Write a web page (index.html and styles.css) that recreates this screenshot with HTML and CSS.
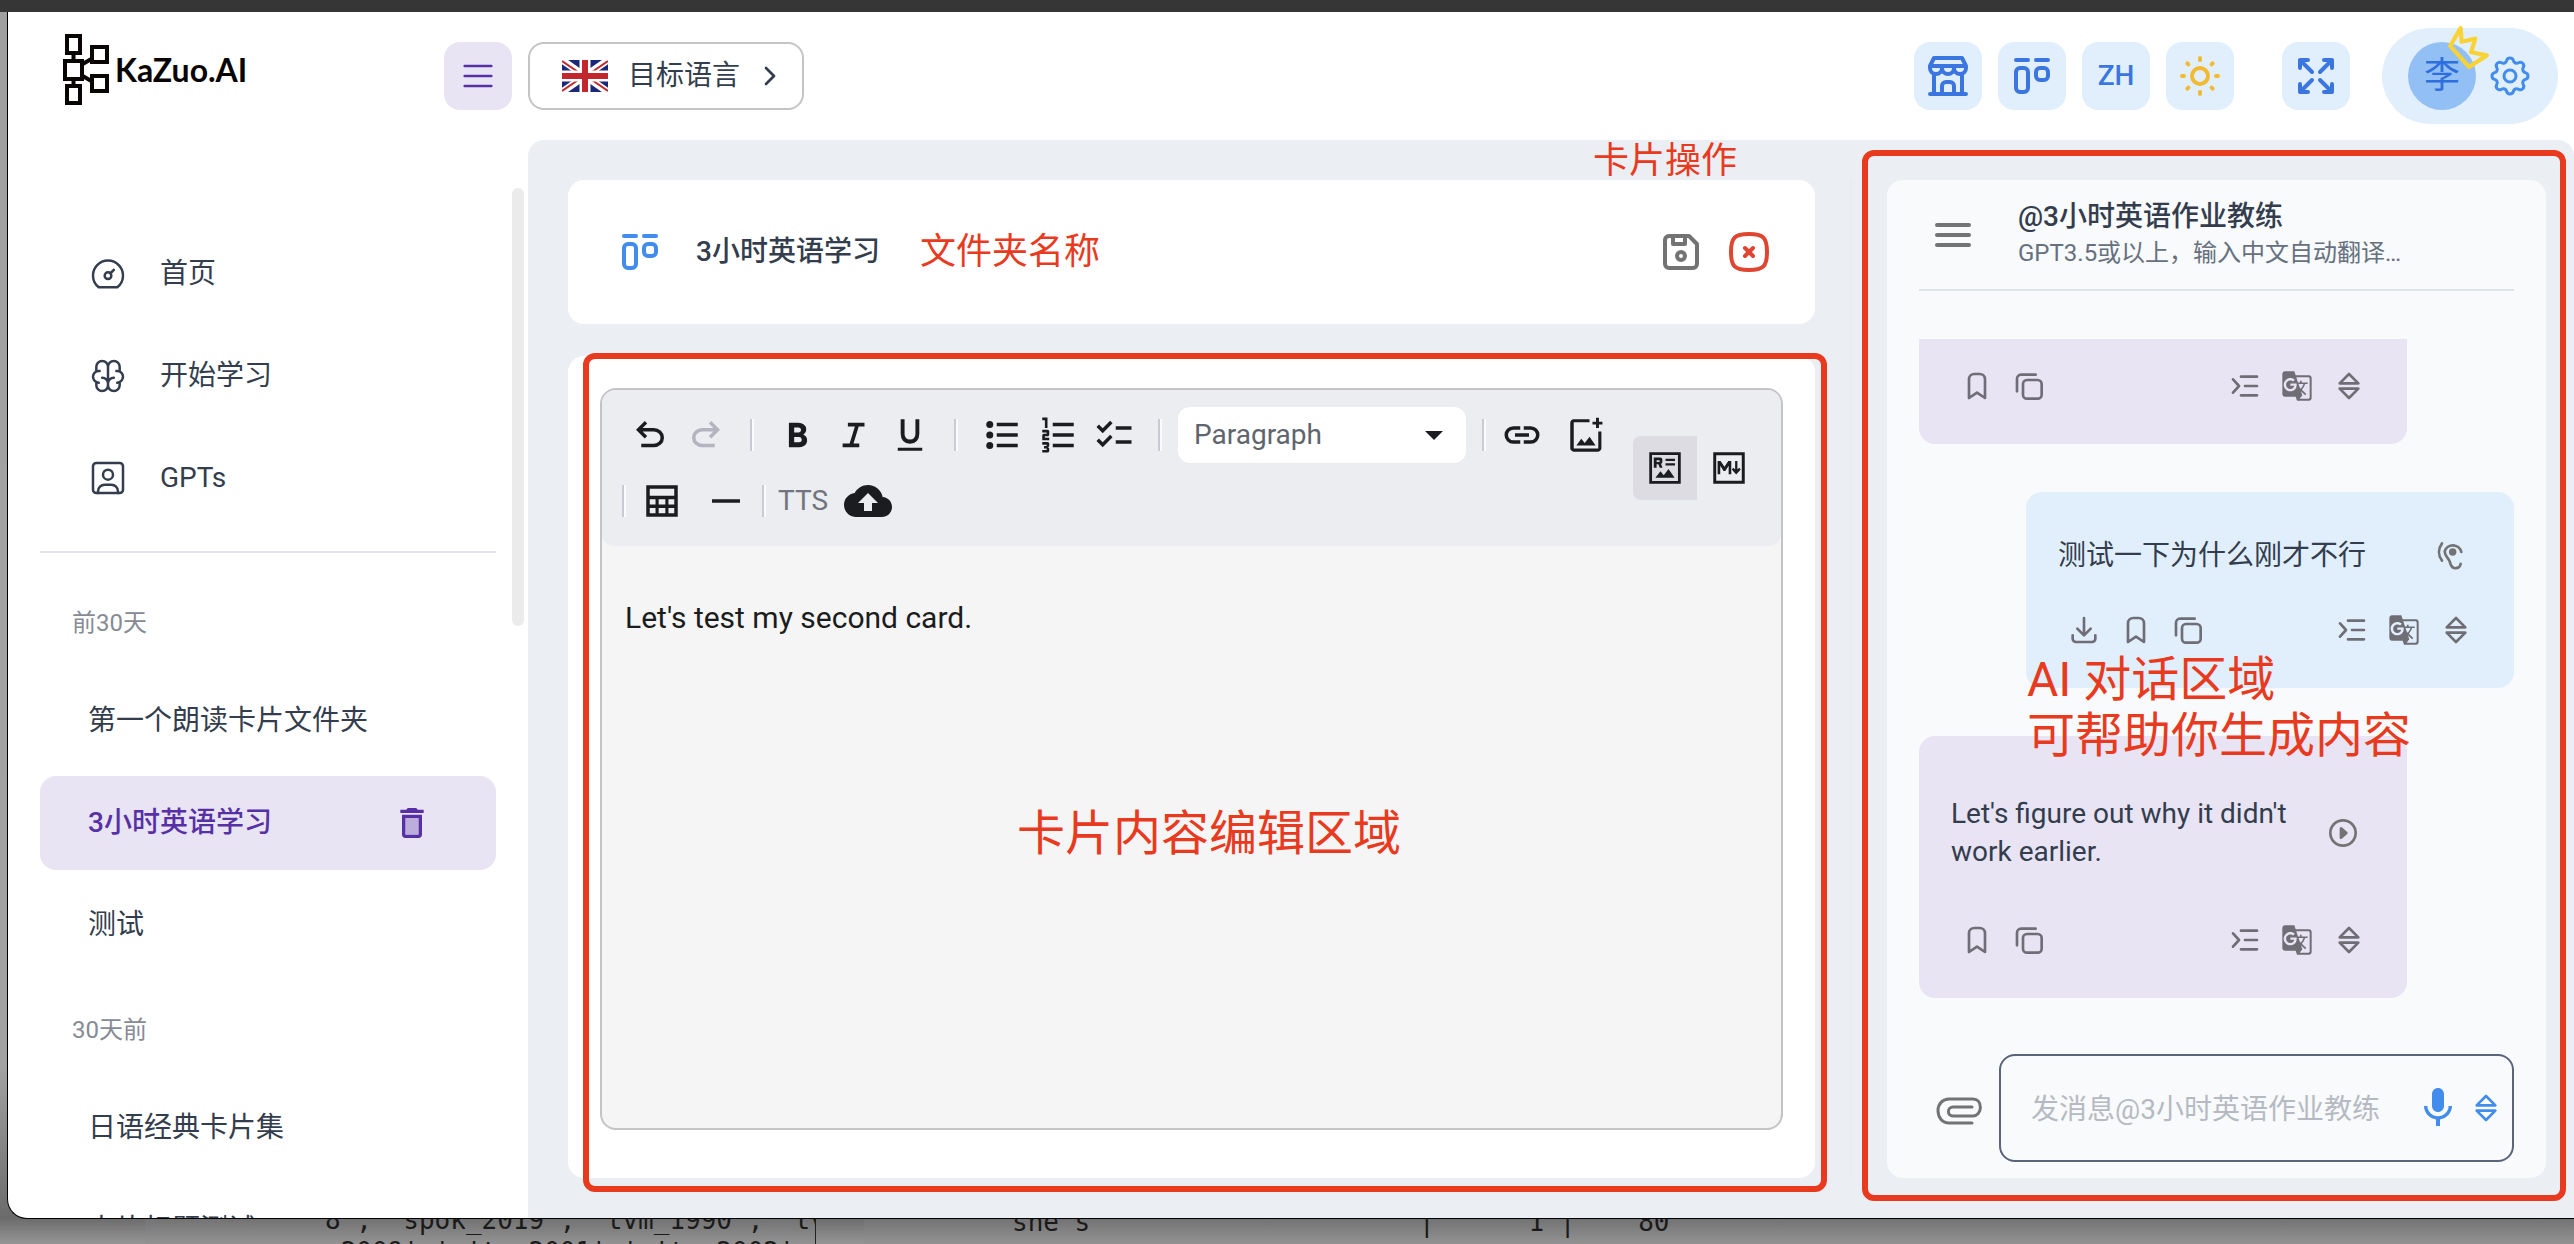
FILE: index.html
```html
<!DOCTYPE html>
<html lang="zh-CN">
<head>
<meta charset="utf-8">
<meta name="viewport" content="width=device-width, initial-scale=1">
<title>KaZuo.AI</title>
<link rel="stylesheet" href="styles.css">
</head>
<body>
<svg class="sprite" aria-hidden="true">
  <symbol id="i-menu" viewBox="0 0 24 24"><path d="M4 6h16M4 12h16M4 18h16"/></symbol>
  <symbol id="i-chevron" viewBox="0 0 24 24"><path d="M9 6l6 6-6 6"/></symbol>
  <symbol id="i-kanban" viewBox="0 0 24 24"><path d="M4 4h6M14 4h6"/><rect x="4" y="8" width="6" height="12" rx="2"/><rect x="14" y="8" width="6" height="6" rx="2"/></symbol>
  <symbol id="i-store" viewBox="0 0 24 24"><path d="M3 21h18M3 7v1a3 3 0 0 0 6 0V7m0 1a3 3 0 0 0 6 0V7m0 1a3 3 0 0 0 6 0V7H3l2-4h14l2 4M5 21V10.85M19 21V10.85M9 21v-4a2 2 0 0 1 2-2h2a2 2 0 0 1 2 2v4"/></symbol>
  <symbol id="i-sun" viewBox="0 0 24 24"><circle cx="12" cy="12" r="4"/><path d="M12 3v1M12 20v1M3 12h1M20 12h1M5.7 5.7l.5 .5M17.8 17.8l.5 .5M18.3 5.7l-.5 .5M6.200 17.8l-.5 .5"/></symbol>
  <symbol id="i-maximize" viewBox="0 0 24 24"><path d="M16 4h4v4M14 10l6-6M8 20H4v-4M4 20l6-6M16 20h4v-4M14 14l6 6M8 4H4v4M4 4l6 6"/></symbol>
  <symbol id="i-gear" viewBox="0 0 24 24"><path d="M10.325 4.317c.426-1.756 2.924-1.756 3.350 0a1.724 1.724 0 0 0 2.573 1.066c1.543-.94 3.310 .826 2.370 2.370a1.724 1.724 0 0 0 1.065 2.572c1.756 .426 1.756 2.924 0 3.350a1.724 1.724 0 0 0-1.066 2.573c.94 1.543-.826 3.310-2.370 2.370a1.724 1.724 0 0 0-2.572 1.065c-.426 1.756-2.924 1.756-3.350 0a1.724 1.724 0 0 0-2.573-1.066c-1.543 .94-3.310-.826-2.370-2.370a1.724 1.724 0 0 0-1.065-2.572c-1.756-.426-1.756-2.924 0-3.350a1.724 1.724 0 0 0 1.066-2.573c-.94-1.543 .826-3.310 2.370-2.370 1 .608 2.296 .070 2.572-1.065z"/><circle cx="12" cy="12" r="3"/></symbol>
  <symbol id="i-gauge" viewBox="0 0 24 24"><circle cx="12" cy="13" r="2"/><path d="M13.450 11.550L15.500 9.500M6.400 20a9 9 0 1 1 11.200 0z"/></symbol>
  <symbol id="i-brain" viewBox="0 0 24 24"><path d="M15.500 13a3.500 3.500 0 0 0-3.500 3.500v1a3.500 3.500 0 0 0 7 0v-1.800M8.500 13a3.500 3.500 0 0 1 3.500 3.500v1a3.500 3.500 0 0 1-7 0v-1.800M17.500 16a3.500 3.500 0 0 0 0-7H17M19 9.300V6.500a3.500 3.500 0 0 0-7 0M6.500 16a3.500 3.500 0 0 1 0-7H7M5 9.300V6.500a3.500 3.500 0 0 1 7 0v10"/></symbol>
  <symbol id="i-user" viewBox="0 0 24 24"><circle cx="12" cy="10" r="3"/><rect x="3" y="3" width="18" height="18" rx="2"/><path d="M6 21v-1a4 4 0 0 1 4-4h4a4 4 0 0 1 4 4v1"/></symbol>
  <symbol id="i-save" viewBox="0 0 24 24"><path d="M6 4h10l4 4v10a2 2 0 0 1-2 2H6a2 2 0 0 1-2-2V6a2 2 0 0 1 2-2"/><circle cx="12" cy="14" r="2"/><path d="M14 4v4H8V4"/></symbol>
  <symbol id="i-close" viewBox="0 0 24 24"><path d="M10 10l4 4m0-4l-4 4M12 3c7.200 0 9 1.800 9 9s-1.800 9-9 9-9-1.800-9-9 1.800-9 9-9z"/></symbol>
  <symbol id="i-undo" viewBox="0 0 24 24"><path d="M7 19v-2h7.100q1.575 0 2.738-1T18 13.500 16.838 11 14.100 10H7.800l2.600 2.600L9 14 4 9l5-5 1.400 1.400L7.800 8h6.300q2.425 0 4.163 1.575T20 13.500t-1.737 3.925T14.100 19z"/></symbol>
  <symbol id="i-bold" viewBox="0 0 24 24"><path d="M6.800 19V5h5.525q1.625 0 3 1T16.700 8.775q0 1.275-.575 1.963t-1.075.987q.625.275 1.388 1.025T17.200 15q0 2.225-1.625 3.113T12.525 19zm3.025-2.800h2.600q1.200 0 1.463-.612t.262-.888-.262-.887-1.538-.613H9.825zm0-5.700h2.325q.825 0 1.200-.425t.375-.95q0-.6-.425-.975t-1.100-.375H9.825z"/></symbol>
  <symbol id="i-italic" viewBox="0 0 24 24"><path d="M5.500 19v-2.100h4l3-9.800h-4V5H18v2.100h-3.300l-3 9.800H15V19z"/></symbol>
  <symbol id="i-underline" viewBox="0 0 24 24"><path d="M5 21v-1.700h14V21zm7-4q-2.525 0-3.925-1.575t-1.400-4.175V3H8.900v8.400q0 1.400.8 2.275t2.300.875 2.300-.875.8-2.275V3h2.225v8.250q0 2.600-1.400 4.175T12 17"/></symbol>
  <symbol id="i-bullets" viewBox="0 0 24 24"><path d="M9 19v-2h12v2zm0-6v-2h12v2zm0-6V5h12v2z"/><circle cx="5" cy="6" r="2"/><circle cx="5" cy="12" r="2"/><circle cx="5" cy="18" r="2"/></symbol>
  <symbol id="i-numbers" viewBox="0 0 24 24"><path d="M3 22v-1.500h2.500v-.75H4v-1.500h1.500v-.75H3V16h3q.425 0 .713.288T7 17v1q0 .425-.287.713T6 19q.425 0 .713.288T7 20v1q0 .425-.287.713T6 22zm0-7v-2.750q0-.425.288-.712T4 11.250h1.500v-.75H3V9h3q.425 0 .713.288T7 10v1.750q0 .425-.287.713T6 12.750H4.500v.75H7V15zm1.500-7V3.500H3V2h3v6zM9 19v-2h12v2zm0-6v-2h12v2zm0-6V5h12v2z"/></symbol>
  <symbol id="i-checks" viewBox="0 0 24 24"><path d="M5.550 19L2 15.450l1.400-1.400 2.125 2.125 4.250-4.250 1.400 1.425zm0-8L2 7.450l1.400-1.400 2.125 2.125 4.250-4.250 1.400 1.425zM13 17v-2h9v2zm0-8V7h9v2z"/></symbol>
  <symbol id="i-link" viewBox="0 0 24 24"><path d="M11 17H7q-2.075 0-3.537-1.463T2 12t1.463-3.537T7 7h4v2H7q-1.250 0-2.125.875T4 12t.875 2.125T7 15h4zm-3-4v-2h8v2zm5 4v-2h4q1.250 0 2.125-.875T20 12t-.875-2.125T17 9h-4V7h4q2.075 0 3.538 1.463T22 12t-1.463 3.538T17 17z"/></symbol>
  <symbol id="i-image" viewBox="0 0 24 24"><path d="M5 21.500q-.825 0-1.412-.587T3 19.500V5q0-.825.588-1.412T5 3h9v1.700H5v15h14V10h1.800v9.500q0 .825-.587 1.413T19 21.500zM17.700 8V6h-2V4.400h2V2.200h1.700v2.200h2V6h-2v2zM6.500 18h11l-3.500-5-2.700 3.600-2-2.400z"/></symbol>
  <symbol id="i-table" viewBox="0 0 24 24"><path d="M3 3h18v18H3zM5 5v4h14V5zm0 6v3h3.300v-3zm5.100 0v3h3.800v-3zm5.600 0v3H19v-3zM5 16v3h3.300v-3zm5.100 0v3h3.800v-3zm5.600 0v3H19v-3z" fill-rule="evenodd"/></symbol>
  <symbol id="i-rule" viewBox="0 0 24 24"><path d="M4 11h16v2H4z"/></symbol>
  <symbol id="i-cloud" viewBox="0 0 24 24"><path d="M19.350 10.040C18.670 6.590 15.640 4 12 4 9.110 4 6.600 5.640 5.350 8.040 2.340 8.360 0 10.910 0 14c0 3.310 2.690 6 6 6h13c2.760 0 5-2.240 5-5 0-2.640-2.050-4.780-4.650-4.960M14 13v4h-4v-4H7l5-5 5 5z"/></symbol>
  <symbol id="i-rich" viewBox="0 0 24 24"><path d="M3 3h18v18H3zM4.600 4.600v14.800h14.800V4.600z" fill-rule="evenodd"/><path d="M5.600 11.800V6h3.600q1.300 0 1.300 1.200v1.300q0 .9-.8 1.100l.9 2.200H9l-.8-2h-1v2zm1.600-3.300h1.700v-1H7.200zM12.300 6.700h5.400V8h-5.400zM12.300 9.300h5.400v1.300h-5.400zM6.500 17.500h11L14 12.500l-2.700 3.700-1.900-2.300z"/></symbol>
  <symbol id="i-markdown" viewBox="0 0 24 24"><path d="M3 3h18v18H3zM4.700 4.700v14.600h14.600V4.700z" fill-rule="evenodd"/><path d="M5.500 15.500V8h1.700l2.200 3.300L11.600 8h1.700v7.500h-1.500v-4.800l-1.900 3H8.900l-1.900-3v4.800zM15.500 8h1.300v4.800l1-1 .9 1-2.600 2.900-2.500-2.900.9-1 1 1z"/></symbol>
  <symbol id="i-bookmark" viewBox="0 0 24 24"><path d="M18 7v14l-6-4-6 4V7a4 4 0 0 1 4-4h4a4 4 0 0 1 4 4z"/></symbol>
  <symbol id="i-copy" viewBox="0 0 24 24"><rect x="7.500" y="7.500" width="14" height="14" rx="3"/><path d="M17 3.500H6a3 3 0 0 0-3 3V16"/></symbol>
  <symbol id="i-outline" viewBox="0 0 24 24"><path d="M9 5h12M12 12h9M9 19h12M3 7l4.500 5L3 17"/></symbol>
  <symbol id="i-translate" viewBox="0 0 24 24"><path d="M21 4H11l-1-3H3c-1.100 0-2 .9-2 2v15c0 1.100.9 2 2 2h8l1 3h9c1.100 0 2-.9 2-2V6c0-1.100-.9-2-2-2M7 16c-2.760 0-5-2.240-5-5s2.240-5 5-5c1.350 0 2.480.5 3.350 1.300L9.030 8.570c-.38-.36-1.040-.78-2.030-.78-1.740 0-3.150 1.440-3.150 3.210S5.260 14.210 7 14.210c2.010 0 2.840-1.440 2.920-2.410H7v-1.710h4.680c.07.31.12.61.12 1.020C11.800 13.970 9.890 16 7 16m6.170-5.420h3.700c-.43 1.250-1.110 2.430-2.050 3.470-.31-.35-.6-.72-.86-1.100zm8.330 9.920c0 .55-.45 1-1 1H14l2-2.500-1.040-3.100 3.100 3.100.92-.92-3.300-3.250.02-.02c1.130-1.250 1.930-2.690 2.400-4.220H20v-1.300h-4.530V8h-1.290v1.290h-1.440L11.460 5.500h9.040c.55 0 1 .45 1 1z"/></symbol>
  <symbol id="i-updown" viewBox="0 0 24 24"><path d="M5 10l7-7 7 7zM5 14l7 7 7-7z"/></symbol>
  <symbol id="i-download" viewBox="0 0 24 24"><path d="M3.500 16v2.500a2.500 2.500 0 0 0 2.500 2.500h12a2.500 2.500 0 0 0 2.500-2.500V16M12 3v13M7 11l5 5 5-5"/></symbol>
  <symbol id="i-ear" viewBox="0 0 24 24"><path d="M20.500 9A6.500 6.500 0 0 0 8 8.500c0 3.500 2.800 5 3.700 7.500.8 2 1 5.200 4.300 5.200 2.200 0 3.800-1.400 4-3.400M6 2.500C3 6.500 3 11.500 6 15.500"/><circle cx="14" cy="9" r="1.800" fill="currentColor"/></symbol>
  <symbol id="i-play" viewBox="0 0 24 24"><circle cx="12" cy="12" r="9.500"/><path d="M10.500 8.500v7l4-3.500z" fill="currentColor"/></symbol>
  <symbol id="i-clip" viewBox="0 0 24 24"><path d="M18.500 19H7c-3.300 0-5.500-2.600-5.500-6.200S4 7 7 7h12c2.200 0 3.700 1.700 3.700 4.200s-1.700 4.300-3.700 4.300H9c-1.500 0-2.300-1-2.300-2.200s1-2.300 2.300-2.300h9.500"/></symbol>
  <symbol id="i-mic" viewBox="0 0 24 24"><path d="M12 14c1.660 0 3-1.340 3-3V5c0-1.660-1.340-3-3-3S9 3.340 9 5v6c0 1.660 1.340 3 3 3m5.300-3c0 3-2.540 5.100-5.300 5.100S6.700 14 6.700 11H5c0 3.410 2.720 6.230 6 6.720V21h2v-3.280c3.280-.48 6-3.300 6-6.720z"/></symbol>
  <symbol id="i-trash" viewBox="0 0 24 24"><path d="M8 9h8v10H8z" opacity=".3"/><path fill-rule="evenodd" d="M15.500 4l-1-1h-5l-1 1H5v2h14V4zM6 19c0 1.100.9 2 2 2h8c1.100 0 2-.9 2-2V7H6zM8 9h8v10H8z"/></symbol>
</svg>

<div class="backdrop" aria-hidden="true">
  <div class="terminal terminal-left">
    <pre class="term-text term-ids">8', 'spok_2019', 'tvm_1990', 'tv
_2009','witw_2001','witw_2002'</pre>
  </div>
  <div class="terminal terminal-right">
    <pre class="term-text term-rows">she's                     |      1 |    80</pre>
  </div>
</div>

<div class="window">
  <header class="topbar">
    <a class="logo" href="#">
      <svg class="logo-mark" viewBox="0 0 46 72" aria-hidden="true"><path d="M10.500 18v36M18 31l12-7M18 41l12 7"/><g fill="#fff"><rect x="4" y="2" width="13" height="17"/><rect x="2" y="27" width="17" height="18"/><rect x="4" y="52" width="13" height="17"/><rect x="29" y="13" width="15" height="15"/><rect x="29" y="42" width="15" height="15"/></g></svg>
      <span>KaZuo.AI</span>
    </a>
    <button class="square square-purple" aria-label="菜单"><svg class="icon s40 line thin"><use href="#i-menu"/></svg></button>
    <button class="language">
      <svg class="flag" viewBox="0 0 46 32" aria-hidden="true"><path fill="#1b2778" d="M0 0h46v32H0z"/><path stroke="#fff" stroke-width="7" d="M0 0l46 32M46 0L0 32"/><path stroke="#c1272d" stroke-width="2" d="M0 1l22 15M46 31L24 16M46 1L24 16M0 31l22-15"/><path stroke="#fff" stroke-width="11" d="M23 0v32M0 16h46"/><path stroke="#c1272d" stroke-width="6" d="M23 0v32M0 16h46"/></svg>
      <span>目标语言</span>
      <svg class="icon s32 line"><use href="#i-chevron"/></svg>
    </button>
    <div class="tools">
      <button class="square" aria-label="商店"><svg class="icon s48 line"><use href="#i-store"/></svg></button>
      <button class="square" aria-label="看板"><svg class="icon s48 line"><use href="#i-kanban"/></svg></button>
      <button class="square">ZH</button>
      <button class="square square-sun" aria-label="主题"><svg class="icon s48 line"><use href="#i-sun"/></svg></button>
      <button class="square square-full" aria-label="全屏"><svg class="icon s48 line"><use href="#i-maximize"/></svg></button>
      <button class="account" aria-label="账户">
        <span class="avatar">李<svg class="crown" viewBox="0 0 40 42" aria-hidden="true"><path d="M12 3L13 16 26 13 22 26 37 29 20 40 2 20z"/></svg></span>
        <svg class="icon s48 line thin"><use href="#i-gear"/></svg>
      </button>
    </div>
  </header>

  <nav class="sidebar">
    <a class="item" href="#"><svg class="icon s40 line thin"><use href="#i-gauge"/></svg>首页</a>
    <a class="item" href="#"><svg class="icon s40 line thin"><use href="#i-brain"/></svg>开始学习</a>
    <a class="item" href="#"><svg class="icon s40 line thin"><use href="#i-user"/></svg>GPTs</a>
    <hr>
    <h2>前30天</h2>
    <a class="item" href="#">第一个朗读卡片文件夹</a>
    <div class="item item-active"><a href="#">3小时英语学习</a><button class="plain" aria-label="删除"><svg class="icon s40 solid"><use href="#i-trash"/></svg></button></div>
    <a class="item" href="#">测试</a>
    <h2>30天前</h2>
    <a class="item" href="#">日语经典卡片集</a>
    <a class="item" href="#">卡片标题测试</a>
    <span class="scrollbar"></span>
  </nav>

  <main class="main">
    <div class="work">
      <section class="card folder">
        <svg class="icon s48 line folder-icon"><use href="#i-kanban"/></svg>
        <h1>3小时英语学习</h1>
        <span class="note note-s">文件夹名称</span>
        <button class="plain push gray" aria-label="保存"><svg class="icon s48 line"><use href="#i-save"/></svg></button>
        <button class="plain danger" aria-label="关闭"><svg class="icon s48 line"><use href="#i-close"/></svg></button>
        <span class="note note-s note-actions">卡片操作</span>
      </section>

      <section class="card editor-card">
        <div class="editor">
          <div class="toolbar">
            <div class="rows">
              <div class="row">
                <button class="tool" aria-label="撤销"><svg class="icon s42 solid"><use href="#i-undo"/></svg></button>
                <button class="tool redo" aria-label="重做" disabled><svg class="icon s42 solid flip"><use href="#i-undo"/></svg></button>
                <i class="sep"></i>
                <button class="tool" aria-label="粗体"><svg class="icon s42 solid"><use href="#i-bold"/></svg></button>
                <button class="tool" aria-label="斜体"><svg class="icon s42 solid"><use href="#i-italic"/></svg></button>
                <button class="tool" aria-label="下划线"><svg class="icon s42 solid"><use href="#i-underline"/></svg></button>
                <i class="sep"></i>
                <button class="tool" aria-label="无序列表"><svg class="icon s42 solid"><use href="#i-bullets"/></svg></button>
                <button class="tool" aria-label="有序列表"><svg class="icon s42 solid"><use href="#i-numbers"/></svg></button>
                <button class="tool" aria-label="任务列表"><svg class="icon s42 solid"><use href="#i-checks"/></svg></button>
                <i class="sep"></i>
                <select class="block" aria-label="段落格式"><option>Paragraph</option></select>
                <i class="sep sep-lead"></i>
                <button class="tool spaced" aria-label="链接"><svg class="icon s42 solid"><use href="#i-link"/></svg></button>
                <button class="tool" aria-label="图片"><svg class="icon s42 solid"><use href="#i-image"/></svg></button>
              </div>
              <div class="row">
                <i class="sep sep-first"></i>
                <button class="tool spaced" aria-label="表格"><svg class="icon s42 solid"><use href="#i-table"/></svg></button>
                <button class="tool spaced" aria-label="分隔线"><svg class="icon s42 solid"><use href="#i-rule"/></svg></button>
                <i class="sep sep-tts"></i>
                <label class="tts" for="tts">TTS</label>
                <button id="tts" class="tool" aria-label="上传"><svg class="icon s48 solid"><use href="#i-cloud"/></svg></button>
              </div>
            </div>
            <div class="modes">
              <button class="mode mode-on" aria-label="富文本"><svg class="icon s42 solid"><use href="#i-rich"/></svg></button>
              <button class="mode" aria-label="Markdown"><svg class="icon s42 solid"><use href="#i-markdown"/></svg></button>
            </div>
          </div>
          <div class="content" contenteditable="true"><p>Let's test my second card.</p></div>
        </div>
        <span class="frame frame-editor"></span>
        <span class="note note-l note-editor">卡片内容编辑区域</span>
      </section>
    </div>

    <aside class="side">
      <section class="chat">
        <header class="chat-head">
          <button class="plain gray" aria-label="会话列表"><svg class="icon s48 line" viewBox="0 0 24 24"><path d="M4 7h16M4 12h16M4 17h16"/></svg></button>
          <div><h2>@3小时英语作业教练</h2><p>GPT3.5或以上，输入中文自动翻译…</p></div>
        </header>
        <div class="messages">
          <article class="message message-cut">
            <div class="actions">
              <button aria-label="收藏"><svg class="icon s32 line"><use href="#i-bookmark"/></svg></button>
              <button aria-label="复制"><svg class="icon s32 line"><use href="#i-copy"/></svg></button>
              <button class="push" aria-label="大纲"><svg class="icon s32 line"><use href="#i-outline"/></svg></button>
              <button aria-label="翻译"><svg class="icon s32 solid"><use href="#i-translate"/></svg></button>
              <button aria-label="展开"><svg class="icon s32 line"><use href="#i-updown"/></svg></button>
            </div>
          </article>
          <article class="message message-own">
            <div class="body"><span>测试一下为什么刚才不行</span><button aria-label="听"><svg class="icon s32 line"><use href="#i-ear"/></svg></button></div>
            <div class="actions">
              <button aria-label="下载"><svg class="icon s32 line"><use href="#i-download"/></svg></button>
              <button aria-label="收藏"><svg class="icon s32 line"><use href="#i-bookmark"/></svg></button>
              <button aria-label="复制"><svg class="icon s32 line"><use href="#i-copy"/></svg></button>
              <button class="push" aria-label="大纲"><svg class="icon s32 line"><use href="#i-outline"/></svg></button>
              <button aria-label="翻译"><svg class="icon s32 solid"><use href="#i-translate"/></svg></button>
              <button aria-label="展开"><svg class="icon s32 line"><use href="#i-updown"/></svg></button>
            </div>
          </article>
          <article class="message">
            <div class="body"><p>Let's figure out why it didn't work earlier.</p><button aria-label="播放"><svg class="icon s32 line"><use href="#i-play"/></svg></button></div>
            <div class="actions">
              <button aria-label="收藏"><svg class="icon s32 line"><use href="#i-bookmark"/></svg></button>
              <button aria-label="复制"><svg class="icon s32 line"><use href="#i-copy"/></svg></button>
              <button class="push" aria-label="大纲"><svg class="icon s32 line"><use href="#i-outline"/></svg></button>
              <button aria-label="翻译"><svg class="icon s32 solid"><use href="#i-translate"/></svg></button>
              <button aria-label="展开"><svg class="icon s32 line"><use href="#i-updown"/></svg></button>
            </div>
            <span class="note note-l note-chat">AI 对话区域<br>可帮助你生成内容</span>
          </article>
        </div>
        <form class="composer">
          <button type="button" class="plain gray attach" aria-label="附件"><svg class="icon s48 line thin"><use href="#i-clip"/></svg></button>
          <div class="field">
            <input type="text" aria-label="消息" placeholder="发消息@3小时英语作业教练">
            <button type="button" aria-label="语音"><svg class="icon s48 solid"><use href="#i-mic"/></svg></button>
            <button type="button" aria-label="展开"><svg class="icon s32 line"><use href="#i-updown"/></svg></button>
          </div>
        </form>
        <span class="frame frame-chat"></span>
      </section>
    </aside>
  </main>
</div>
</body>
</html>
```
FILE: styles.css
```css
* { box-sizing: border-box; }

:root {
  --blue: #3b76e0;
  --blue-soft: #e1effd;
  --purple: #5730a6;
  --purple-soft: #e8e4f3;
  --ink: #333d4d;
  --muted: #66707f;
  --gray: #737373;
  --mark: #e83a1e;
}

body {
  margin: 0;
  height: 100vh;
  overflow: hidden;
  position: relative;
  padding: 12px 0 25px 7px;
  background: #363636;
  color: var(--ink);
  font-family: Roboto, "Noto Sans CJK SC", sans-serif;
  font-size: 28px;
  line-height: 36px;
}

h1, h2, p, pre { margin: 0; font: inherit; }
a { color: inherit; text-decoration: none; }
button, select, input { font: inherit; color: inherit; }
button { display: flex; align-items: center; justify-content: center; border: 0; padding: 0; background: none; }

.sprite { position: absolute; width: 0; height: 0; }
.icon { display: block; flex: none; }
.s32 { width: 32px; height: 32px; }
.s40 { width: 40px; height: 40px; }
.s42 { width: 42px; height: 42px; }
.s48 { width: 48px; height: 48px; }
.line { fill: none; stroke: currentColor; stroke-width: 2; stroke-linecap: round; stroke-linejoin: round; }
.thin { stroke-width: 1.5; }
.solid { fill: currentColor; }
.flip { transform: scaleX(-1); }
.push { margin-left: auto; }
.gray { color: var(--gray); }

/* Other windows that show behind the app */
.backdrop {
  position: absolute;
  inset: 12px 0 0;
  background: linear-gradient(to top, #969696, #6b6b6b 26px, #a3a3a3 180px, #a0a0a0);
}
.terminal { position: absolute; bottom: 0; height: 80px; overflow: hidden; background: linear-gradient(to top, #939393, #6f6f6f 28px); }
.terminal-left { left: 145px; width: 671px; border-right: 1px solid #222; }
.terminal-right { left: 864px; right: 0; }
.term-text { font: 26px/32px "DejaVu Sans Mono", monospace; color: #1a1a1a; position: absolute; }
.term-ids { left: 180px; bottom: -24px; }
.term-rows { left: 148px; bottom: 6px; }

.window {
  position: relative;
  height: 100%;
  display: grid;
  grid-template-columns: 520px minmax(0, 1fr);
  grid-template-rows: 128px minmax(0, 1fr);
  overflow: hidden;
  background: #fff;
  border: solid #000;
  border-width: 0 0 1px 1px;
  border-radius: 0 0 0 20px;
}

.topbar { grid-column: 1 / -1; display: flex; align-items: center; padding: 0 16px 0 55px; }
.logo { width: 381px; display: flex; align-items: center; gap: 6px; color: #0a0505; font: 700 32px/36px Lato, sans-serif; padding-bottom: 12px; }
.logo-mark { width: 46px; height: 72px; fill: none; stroke: #0a0505; stroke-width: 4; }
.square { width: 68px; height: 68px; border-radius: 16px; background: var(--blue-soft); color: var(--blue); font-weight: 500; }
.square-purple { background: var(--purple-soft); color: var(--purple); }
.square-sun { color: #f3ba2f; }
.square-full { margin: 0 16px 0 32px; }
.language { width: 276px; height: 68px; margin-left: 16px; padding-left: 32px; gap: 20px; justify-content: flex-start; border: 2px solid #c4c4c4; border-radius: 16px; }
.language .icon { margin-left: -6px; }
.flag { width: 46px; height: 32px; }
.tools { margin-left: auto; display: flex; align-items: center; gap: 16px; }
.account { width: 176px; height: 96px; border-radius: 48px; gap: 10px; padding-left: 2px; background: var(--blue-soft); color: #418cec; }
.avatar { position: relative; width: 68px; height: 68px; border-radius: 50%; display: grid; place-items: center; background: #93c0f4; color: #2f6fdd; font-size: 36px; }
.crown { position: absolute; left: 40px; top: -17px; width: 42px; height: 44px; fill: none; stroke: #f9d336; stroke-width: 4; stroke-linejoin: round; }

.sidebar { position: relative; display: flex; flex-direction: column; gap: 8px; padding: 87px 32px 0; overflow: hidden; }
.item { flex: none; height: 94px; display: flex; align-items: center; gap: 32px; padding: 0 64px 0 48px; border-radius: 16px; }
.item-active { background: var(--purple-soft); color: var(--purple); font-weight: 500; justify-content: space-between; }
.sidebar hr { width: 100%; flex: none; margin: 18px 0 12px; border: 0; border-top: 2px solid #e0e3ee; }
.sidebar h2 { flex: none; height: 93px; padding: 30px 32px 0; font-size: 24px; line-height: 40px; color: #868b95; }
.scrollbar { position: absolute; right: 4px; top: 48px; width: 12px; height: 438px; border-radius: 6px; background: #ebebeb; }

.main {
  display: grid;
  grid-template-columns: minmax(0, 1fr) 696px;
  gap: 35px;
  padding: 40px 28px 40px 40px;
  border-radius: 16px 16px 0 0;
  background: #ebeff4;
}
.work { display: flex; flex-direction: column; gap: 32px; }
.card { position: relative; border-radius: 16px; background: #fff; }
.folder { height: 144px; flex: none; display: flex; align-items: center; padding: 0 42px 0 48px; }
.folder h1 { margin: 0 40px 0 32px; font-weight: 500; }
.folder-icon { color: #418cec; }
.danger { margin-left: 20px; color: #df4632; }

.note { color: var(--mark); white-space: nowrap; }
.note-s { font-size: 36px; line-height: 48px; }
.note-l { font-size: 48px; line-height: 56px; position: absolute; }
.note-actions { position: absolute; right: 78px; top: -43px; }
.note-editor { left: 36%; top: 450px; }
.note-chat { left: 108px; top: -84px; }
.frame { position: absolute; border: 6px solid var(--mark); border-radius: 12px; pointer-events: none; }
.frame-editor { inset: -3px -12px -14px 15px; }
.frame-chat { inset: -30px -20px -23px -25px; }

.editor-card { flex: 1; display: flex; padding: 32px 32px 48px; }
.editor { flex: 1; min-width: 0; display: flex; flex-direction: column; overflow: hidden; border: 2px solid #c4c4c4; border-radius: 16px; background: #f5f5f5; }
.toolbar { display: flex; align-items: center; justify-content: space-between; padding: 12px 20px; border-radius: 0 0 12px 12px; background: #ecedf1; color: #1b1c20; }
.row { display: flex; align-items: center; height: 66px; }
.tool { width: 56px; height: 56px; flex: none; }
.redo { color: #b3b4c0; }
.sep { flex: none; width: 4px; height: 32px; margin: 0 16px; border: solid; border-width: 0 2px; border-color: #c9cad2 #fbfbfd #c9cad2 #c9cad2; }
.sep-lead { margin-right: 8px; }
.sep-first { margin: 0 8px 0 0; }
.sep-tts { margin: 0 12px 0 0; }
.spaced { margin-right: 8px; }
.block {
  width: 288px;
  height: 56px;
  padding: 0 16px;
  border: 0;
  border-radius: 12px;
  appearance: none;
  color: #60646c;
  background: #fff url("data:image/svg+xml,%3Csvg xmlns='http://www.w3.org/2000/svg' width='18' height='9'%3E%3Cpath d='M0 0h18L9 9z' fill='%231b1c20'/%3E%3C/svg%3E") right 23px center no-repeat;
}
.tts { width: 62px; color: #70747c; }
.modes { display: flex; }
.mode { width: 64px; height: 64px; }
.mode-on { border-radius: 8px 0 0 8px; background: #dddce2; }
.content { flex: 1; padding: 54px 23px; font-size: 30px; color: #1b1c20; outline: 0; }

.side { padding-left: 35px; border-left: 2px solid #e8ebf0; }
.chat { position: relative; height: 100%; display: flex; flex-direction: column; padding: 0 32px 16px; border-radius: 16px; background: #f8fafc; }
.chat-head { flex: none; height: 111px; display: flex; align-items: center; gap: 41px; padding-left: 10px; border-bottom: 2px solid #dfe3ea; }
.chat-head h2 { font-weight: 500; }
.chat-head p { font-size: 24px; color: var(--muted); }
.messages { flex: 1; min-height: 0; margin-top: 48px; display: flex; flex-direction: column; justify-content: flex-end; gap: 48px; }
.message { position: relative; width: 488px; flex: none; padding: 45px 32px 32px; border-radius: 16px; background: var(--purple-soft); }
.message-cut { padding-top: 21px; border-radius: 0 0 16px 16px; }
.message-own { align-self: flex-end; background: var(--blue-soft); }
.body { display: flex; align-items: center; justify-content: space-between; line-height: 38px; margin-bottom: 29px; }
.body p { margin: 14px 0; }
.body button { flex: none; width: 64px; color: var(--gray); }
.actions { display: flex; }
.actions button { width: 52px; height: 52px; color: #6f6d75; }
.composer { flex: none; display: flex; margin-top: 56px; }
.attach { width: 80px; padding-top: 2px; }
.field { flex: 1; height: 108px; display: flex; align-items: center; padding: 0 2px 0 30px; border: 2px solid #5b6579; border-radius: 16px; color: #418cec; }
.field input { flex: 1; min-width: 0; padding: 4px 0 0; border: 0; outline: 0; background: none; color: var(--ink); }
.field input::placeholder { color: #b5bac2; opacity: 1; }
.field button { width: 48px; height: 48px; }
```
